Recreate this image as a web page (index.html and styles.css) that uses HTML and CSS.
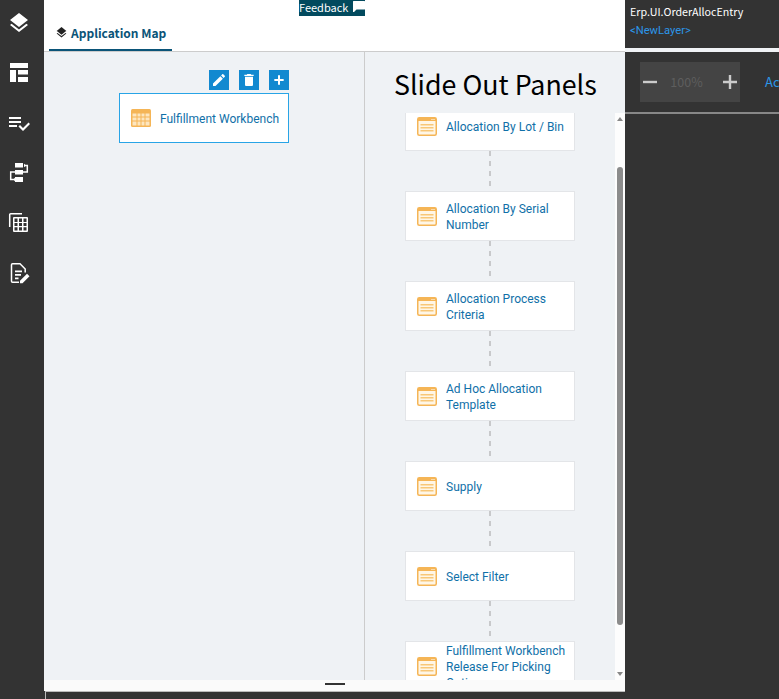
FILE: index.html
```html
<!DOCTYPE html>
<html lang="en">
<head>
<meta charset="utf-8">
<title>Application Map</title>
<link rel="stylesheet" href="styles.css">
</head>
<body>
<div class="app">
  <nav class="rail">
    <svg class="rail-icon" viewBox="0 0 24 24"><path d="M11.99 18.54l-7.37-5.73L3 14.07l9 7 9-7-1.63-1.27-7.38 5.73zM12 16l7.36-5.73L21 9l-9-7-9 7 1.63 1.27L12 16z"/></svg>
    <svg class="rail-icon" viewBox="0 0 24 24"><path d="M3 2h18v5H3zM3 9h6v12H3zM11 9h10v4.500H11zM11 16h10v5H11z"/></svg>
    <svg class="rail-icon" viewBox="0 0 24 24"><path d="M14 10H2v2h12v-2zm0-4H2v2h12V6zM2 16h8v-2H2v2zm19.500-4.500L23 13l-6.990 7-4.510-4.500L13 14l3.010 3 5.490-5.500z"/></svg>
    <svg class="rail-icon" viewBox="0 0 24 24"><path d="M8 2h8v4.500H8zM8 9h8v4.500H8zM8 16h8v5H8z"/><path class="thin" d="M17 4.500h3.300v6.500H16M8 11H3.700v7.500H7"/><path d="M17 2.800l2 1.700-2 1.700zM7 16.800l2 1.700-2 1.700z"/></svg>
    <svg class="rail-icon" viewBox="0 0 24 24"><path class="thin" d="M2.700 16V3.700a1 1 0 0 1 1-1H15"/><path fill-rule="evenodd" d="M7 6h13a1 1 0 0 1 1 1v13a1 1 0 0 1-1 1H7a1 1 0 0 1-1-1V7a1 1 0 0 1 1-1zM7.500 7.500v3.500h3V7.500zM12 7.500v3.500h3V7.500zM16.500 7.500v3.500h3V7.500zM7.500 12v3h3v-3zM12 12v3h3v-3zM16.500 12v3h3v-3zM7.500 16.200v3.300h3v-3.300zM12 16.200v3.300h3v-3.300zM16.500 16.200v3.300h3v-3.300z"/></svg>
    <svg class="rail-icon" viewBox="0 0 24 24"><path class="thin" d="M12 21.200H5.500a1 1 0 0 1-1-1V3.800a1 1 0 0 1 1-1h7.500l5.200 5.200v3.500"/><path d="M8 9.500h7v1.800H8zM8 13h6v1.800H8zM8 16.500h3.500v1.800H8zM13 22.300v-2.600l7-7 2.500 2.500-7 7z"/></svg>
  </nav>

  <main class="center">
    <header class="tabs">
      <div class="tab">
        <svg class="tab-icon" viewBox="0 0 24 24"><path d="M11.990 18.540l-7.370-5.730L3 14.070l9 7 9-7-1.630-1.270-7.380 5.730zM12 16l7.360-5.730L21 9l-9-7-9 7 1.630 1.270L12 16z"/></svg>
        <span>Application Map</span>
      </div>
    </header>
    <div class="feedback">
      <span class="feedback-text">Feedback</span>
      <svg class="feedback-icon" viewBox="0 0 12 11"><path d="M.5 0h11a.5.500 0 0 1 .5.500v7.500a.5.500 0 0 1-.5.500H3.500L1 11H0V.500A.5.500 0 0 1 .5 0z"/></svg>
    </div>

    <div class="panes">
      <section class="map">
        <div class="map-tools">
          <button class="tool"><svg viewBox="0 0 24 24"><path d="M3 17.250V21h3.750L17.810 9.940l-3.750-3.750L3 17.250zM20.710 7.040c.39-.39.39-1.020 0-1.410l-2.340-2.340c-.39-.39-1.020-.39-1.410 0l-1.830 1.830 3.750 3.750 1.830-1.830z"/></svg></button>
          <button class="tool"><svg viewBox="0 0 24 24"><path d="M6 19c0 1.100.9 2 2 2h8c1.100 0 2-.9 2-2V7H6v12zM19 4h-3.500l-1-1h-5l-1 1H5v2h14V4z"/></svg></button>
          <button class="tool"><svg viewBox="0 0 24 24"><path d="M19 13.500h-5.500V19h-3v-5.500H5v-3h5.500V5h3v5.500H19v3z"/></svg></button>
        </div>
        <div class="map-node">
          <svg class="grid-icon" viewBox="0 0 20 18"><rect width="20" height="18" rx="1.500" fill="#f5b556"/><path fill="#fde6bf" d="M1.500 4.500h4v3h-4zM6.500 4.500h3v3h-3zM10.500 4.500h3v3h-3zM14.500 4.500h4v3h-4zM1.500 8.500h4v3h-4zM6.500 8.500h3v3h-3zM10.500 8.500h3v3h-3zM14.500 8.500h4v3h-4zM1.500 12.500h4v4h-4zM6.500 12.500h3v4h-3zM10.500 12.500h3v4h-3zM14.500 12.500h4v4h-4z"/></svg>
          <span>Fulfillment Workbench</span>
        </div>
      </section>

      <section class="slides">
        <h1>Slide Out Panels</h1>
        <div class="scroller">
          <div class="flow">
            <a class="card"><svg class="panel-icon" viewBox="0 0 20 19"><use href="#panel"/></svg><span>Allocation By Lot / Bin</span></a>
            <a class="card"><svg class="panel-icon" viewBox="0 0 20 19"><use href="#panel"/></svg><span>Allocation By Serial Number</span></a>
            <a class="card"><svg class="panel-icon" viewBox="0 0 20 19"><use href="#panel"/></svg><span>Allocation Process Criteria</span></a>
            <a class="card"><svg class="panel-icon" viewBox="0 0 20 19"><use href="#panel"/></svg><span>Ad Hoc Allocation Template</span></a>
            <a class="card"><svg class="panel-icon" viewBox="0 0 20 19"><use href="#panel"/></svg><span>Supply</span></a>
            <a class="card"><svg class="panel-icon" viewBox="0 0 20 19"><use href="#panel"/></svg><span>Select Filter</span></a>
            <a class="card"><svg class="panel-icon" viewBox="0 0 20 19"><use href="#panel"/></svg><span>Fulfillment Workbench Release For Picking Options</span></a>
          </div>
          <div class="scrollbar">
            <span class="arrow up"></span>
            <span class="thumb"></span>
            <span class="arrow down"></span>
          </div>
        </div>
      </section>
    </div>

    <div class="strip"><span class="grip"></span></div>
    <div class="center-foot"></div>
  </main>

  <aside class="side">
    <div class="side-head">
      <div class="side-title">Erp.UI.OrderAllocEntry</div>
      <div class="side-layer">&lt;NewLayer&gt;</div>
    </div>
    <div class="side-gap"></div>
    <div class="side-bar">
      <div class="zoom">
        <svg class="zoom-btn" viewBox="5 5 14 14"><path d="M19 13.200H5v-2.400h14v2.400z"/></svg>
        <span class="zoom-val">100%</span>
        <svg class="zoom-btn" viewBox="5 5 14 14"><path d="M19 13.200h-5.800V19h-2.400v-5.800H5v-2.400h5.800V5h2.400v5.800H19v2.400z"/></svg>
      </div>
      <span class="side-link">Actions</span>
    </div>
  </aside>
</div>
<svg class="defs" width="0" height="0" aria-hidden="true">
  <symbol id="panel" viewBox="0 0 20 19">
    <rect x=".75" y=".75" width="18.500" height="17.500" rx="1.500" fill="#fff6e6" stroke="#f5b556" stroke-width="1.500"/>
    <path fill="#f5b556" d="M1 1h18v3H1z"/>
    <path fill="#fff" d="M14.500 2h1v1h-1zM16.500 2h1v1h-1z"/>
    <path fill="#f8c778" d="M3.500 7h13v1.500h-13zM3.500 10h13v1.500h-13zM3.500 13h13v1.500h-13z"/>
  </symbol>
</svg>
</body>
</html>
```
FILE: styles.css
```css
* { box-sizing: border-box; }
html, body { margin: 0; height: 100%; overflow: hidden; }
body { font-family: Roboto, "Liberation Sans", sans-serif; background: #333; }
.defs { position: absolute; }

.app { display: flex; width: 779px; height: 699px; }

.rail {
  width: 44px; flex: none; background: #333;
  display: flex; flex-direction: column; align-items: flex-start;
  padding: 11px 0 0 7px; gap: 26px;
}
.rail-icon { width: 24px; height: 24px; fill: #fff; display: block; flex: none; }
.rail-icon .thin { fill: none; stroke: #fff; stroke-width: 1.500; }

.center {
  width: 581px; flex: none; position: relative;
  display: flex; flex-direction: column; background: #333;
}
.tabs { height: 52px; flex: none; padding: 19px 0 0 5px; border-bottom: 1px solid #ccc; background: #fff; }
.tab {
  display: flex; align-items: center; gap: 3px;
  height: 32px; width: 123px; padding: 0 0 3px 6px; white-space: nowrap;
  border-bottom: 2px solid #0a5478;
  font: 600 12px "Noto Sans CJK SC", sans-serif; color: #0a5478;
}
.tab-icon { width: 13px; height: 13px; fill: #222; flex: none; }

.feedback {
  position: absolute; left: 255px; top: 0; width: 66px; height: 16px; overflow: hidden;
  display: flex; align-items: flex-start; gap: 5px; white-space: nowrap;
  background: #024a5e; color: #fff;
  font: 11px/14px "Noto Sans CJK SC", sans-serif;
}
.feedback-icon { width: 12px; height: 11px; fill: #fff; flex: none; margin-top: 1px; }

.panes { flex: 1; display: flex; min-height: 0; background: #eff2f5; }

.map { width: 321px; flex: none; border-right: 1px solid #ccc; padding: 18px 75px 0 75px; }
.map-tools { display: flex; justify-content: flex-end; gap: 10px; }
.tool {
  width: 20px; height: 20px; padding: 2px; border: 0; background: #1289d0;
  display: block;
}
.tool svg { width: 16px; height: 16px; fill: #fff; display: block; }
.map-node {
  margin-top: 3px; height: 50px; background: #fff; border: 1px solid #28a4e6;
  display: flex; align-items: center; gap: 9px; padding: 2px 0 0 11px;
  font-size: 12px; color: #1070a8; white-space: nowrap;
}
.grid-icon { width: 20px; height: 18px; flex: none; margin-top: -3px; }

.slides { flex: 1; min-width: 0; display: flex; flex-direction: column; }
.slides h1 {
  margin: 0; height: 61px; flex: none; padding: 14px 0 0 29px;
  font: 400 26.800px/36px "Noto Sans CJK SC", sans-serif; color: #000; white-space: nowrap;
}
.scroller { flex: 1; min-height: 0; position: relative; overflow: hidden; padding-right: 10px; }
.flow {
  margin-top: -12px; display: flex; flex-direction: column; align-items: center; gap: 40px;
}
.card {
  position: relative; width: 170px; height: 50px; flex: none;
  background: #fff; border: 1px solid #e3e5e8;
  display: flex; align-items: center; gap: 9px; padding: 0 5px 0 11px;
  font-size: 12px; line-height: 16px; color: #1070a8;
}
.card:not(:last-child)::after {
  content: ""; position: absolute; left: 83px; top: 49px; width: 2px; height: 40px;
  background: repeating-linear-gradient(#c8c9cb 0 5px, transparent 5px 10px);
}
.panel-icon { width: 20px; height: 19px; flex: none; }
.card span { display: block; margin-top: 2px; }

.scrollbar {
  position: absolute; right: 0; top: 0; bottom: 0; width: 10px; background: #fdfdfd;
  display: flex; flex-direction: column; align-items: center; padding-top: 4px;
}
.thumb { width: 6px; height: 458px; margin-top: 46px; background: #8c8c8c; border-radius: 3px; }
.arrow { width: 0; height: 0; border-left: 3.500px solid transparent; border-right: 3.500px solid transparent; }
.arrow.up { border-bottom: 4px solid #888; }
.arrow.down { border-top: 4px solid #888; margin-top: 47px; }

.strip { height: 11px; flex: none; background: #fafafa; display: flex; justify-content: center; padding: 3px 0 0 1px; }
.grip { width: 20px; height: 2px; background: #333; }
.center-foot { height: 8px; flex: none; margin-left: 1px; background: #333; border-top: 1px solid #bbb; border-left: 1px solid #bbb; }

.side { flex: 1; min-width: 0; display: flex; flex-direction: column; background: #333; overflow: hidden; }
.side-head { height: 48px; flex: none; padding: 4px 0 0 5px; }
.side-title { font: 10.700px/16px "Noto Sans CJK SC", sans-serif; color: #fff; white-space: nowrap; }
.side-layer { font: 11.200px/16px Roboto, sans-serif; color: #2c96e8; margin-top: 3px; white-space: nowrap; }
.side-gap { height: 4px; flex: none; background: #f0f3f6; }
.side-bar {
  height: 62px; flex: none; display: flex; align-items: center;
  padding: 0 0 0 15px; gap: 25px; white-space: nowrap;
  border-bottom: 2px solid #888;
}
.zoom { width: 100px; height: 40px; flex: none; background: #444; display: flex; align-items: center; justify-content: space-between; padding: 0 3px; }
.zoom-btn { width: 14px; height: 14px; fill: #ccc; flex: none; }
.zoom-val { color: #5e5e5e; font: 12.500px/16px "Noto Sans CJK SC", sans-serif; margin-right: 7px; }
.side-link { color: #2c96e8; font: 13px/16px "Noto Sans CJK SC", sans-serif; }
```
